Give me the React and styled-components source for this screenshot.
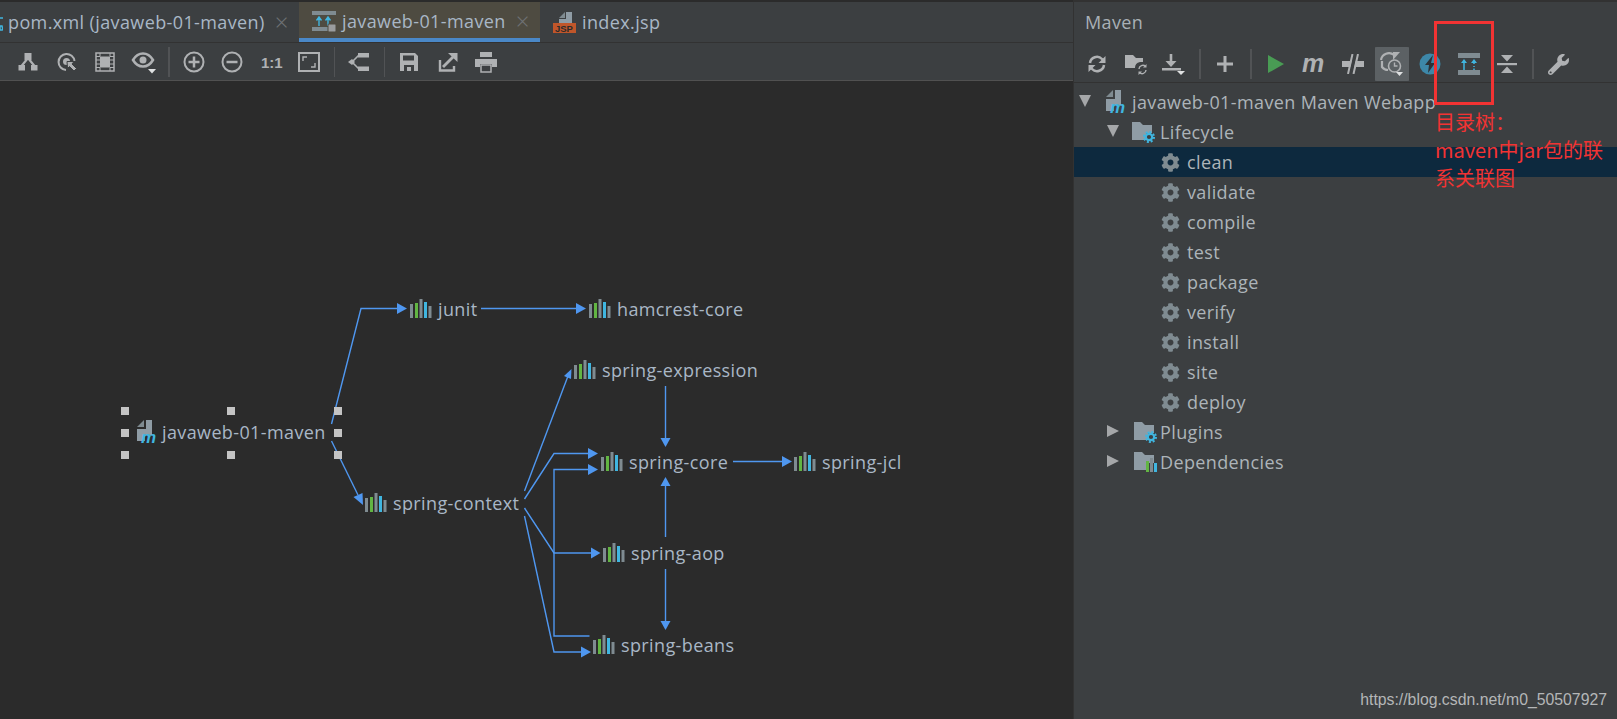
import React from "react";
import styled, { createGlobalStyle } from "styled-components";
import { FaCog, FaWrench } from "react-icons/fa";

const uiFont = `"Open Sans", "Noto Sans", sans-serif`;
const grey = "#afb1b3";
const blue = "#40b6e0";

const Global = createGlobalStyle`
  html, body { margin: 0; padding: 0; background: #2b2b2b; overflow: hidden; }
  * { box-sizing: border-box; }
`;

const Page = styled.div`
  display: flex;
  width: 1617px;
  height: 719px;
  font-family: ${uiFont};
  letter-spacing: 0.38px;
  overflow: hidden;
`;

const Editor = styled.div`
  display: flex;
  flex-direction: column;
  width: 1074px;
  border-right: 1px solid #323232;
  padding-top: 2px;
  background: #2b2b2b;
`;

const TabBar = styled.div`
  display: flex;
  height: 41px;
  background: #3c3f41;
  border-bottom: 1px solid #323232;
  overflow: hidden;
`;

const Tab = styled.div`
  display: flex;
  align-items: center;
  flex: none;
  width: ${(p) => p.$w}px;
  padding-left: ${(p) => p.$pad}px;
  padding-top: ${(p) => (p.$active ? 2 : 0)}px;
  font-size: 18px;
  color: #a9b7c6;
  background: ${(p) => (p.$active ? "#4e4b41" : "transparent")};
  border-bottom: ${(p) => (p.$active ? "4px solid #4a88c7" : "none")};
  white-space: nowrap;
`;

const TabIcon = styled.span`
  display: flex;
  flex: none;
  margin-right: ${(p) => p.$mr || 6}px;
`;

const Close = styled.span`
  margin-left: ${(p) => p.$ml}px;
  font-size: 24px;
  line-height: 1;
  font-weight: 300;
  color: #6e7274;
`;

const Toolbar = styled.div`
  display: flex;
  align-items: center;
  flex: none;
  height: ${(p) => p.$h}px;
  padding-left: ${(p) => p.$pad}px;
  background: #3c3f41;
  border-bottom: 1px solid ${(p) => p.$line};
`;

const IconButton = styled.div`
  display: flex;
  align-items: center;
  justify-content: center;
  flex: none;
  width: 38.5px;
  height: 34px;
  color: ${grey};
  background: ${(p) => (p.$on ? "linear-gradient(#5c6164, #5c6164) center / 34px 34px no-repeat" : "none")};
  border-radius: 4px;
`;

const Sep = styled.span`
  flex: none;
  width: 1.5px;
  height: 30px;
  margin: 0 ${(p) => p.$m}px;
  background: #515355;
`;

const Canvas = styled.div`
  position: relative;
  flex: 1;
  background: #2b2b2b;
`;

const Edges = styled.svg`
  position: absolute;
  inset: 0;
`;

const Node = styled.div`
  position: absolute;
  left: ${(p) => p.$x}px;
  top: ${(p) => p.$y}px;
  display: flex;
  align-items: center;
  gap: ${(p) => p.$gap}px;
  transform: translateY(-50%);
  font-size: 18px;
  color: #a9b7c6;
  white-space: nowrap;
`;

const Handle = styled.span`
  position: absolute;
  left: ${(p) => p.$x - 4}px;
  top: ${(p) => p.$y - 4}px;
  width: 8px;
  height: 8px;
  background: #c4c4c4;
`;

const Side = styled.div`
  display: flex;
  flex-direction: column;
  flex: 1;
  background: #3c3f41;
  border-top: 2px solid #323232;
`;

const SideTitle = styled.div`
  height: 44px;
  padding: 8px 0 0 11px;
  font-size: 18px;
  color: #a9b0b6;
`;

const Tree = styled.div`
  padding-top: 4px;
`;

const Row = styled.div`
  display: flex;
  align-items: center;
  height: 30px;
  padding-left: ${(p) => p.$indent}px;
  font-size: 18px;
  color: #adb4b9;
  background: ${(p) => (p.$selected ? "#0d293e" : "transparent")};
  white-space: nowrap;
`;

const RowLabel = styled.span`
  margin-left: ${(p) => p.$ml}px;
`;

const Arrow = styled.span`
  flex: none;
  width: 0;
  height: 0;
  margin-top: -3px;
  ${(p) =>
    p.$open
      ? `border-left: 6.5px solid transparent; border-right: 6.5px solid transparent; border-top: 12px solid #a5a7a9; margin-right: ${p.$mr}px;`
      : `border-top: 6.5px solid transparent; border-bottom: 6.5px solid transparent; border-left: 12px solid #a5a7a9; margin-right: ${p.$mr}px;`}
`;

const Gear = styled(FaCog)`
  flex: none;
  width: 19px;
  height: 19px;
  margin-right: 7px;
  color: #7f8b91;
`;

const Frame = styled.div`
  position: absolute;
  left: 1434px;
  top: 21px;
  width: 60px;
  height: 84px;
  border: 3px solid #f23333;
`;

const Note = styled.div`
  position: absolute;
  left: 1435px;
  top: 108px;
  width: 185px;
  font-family: "Noto Sans CJK SC", "Noto Sans", sans-serif;
  font-size: 20px;
  font-weight: 400;
  letter-spacing: 0;
  line-height: 28px;
  color: #f23333;
`;

const Mark = styled.div`
  position: absolute;
  right: 10px;
  top: 691px;
  font-family: "Liberation Sans", sans-serif;
  font-size: 15.8px;
  letter-spacing: 0;
  color: #b4b6b7;
`;

const Ico = ({ w = 20, h = 20, children }) => (
  <svg width={w} height={h} viewBox={`0 0 ${w} ${h}`} fill="none">
    {children}
  </svg>
);

const Lib = () => (
  <Ico w={22} h={20}>
    <rect x="0" y="5" width="3" height="14" fill="#7f8b91" />
    <rect x="5" y="4" width="3" height="15" fill="#62b543" />
    <rect x="9.5" y="0" width="3" height="19" fill="#7f8b91" />
    <rect x="14" y="3" width="3" height="16" fill={blue} />
    <rect x="18.5" y="7" width="3" height="12" fill="#7f8b91" />
  </Ico>
);

const Module = () => (
  <Ico w={22} h={24}>
    <path d="M0 7 7 0v7z" fill="#7f8b91" />
    <path d="M9 0h6v15H8v6H0V9h9z" fill="#8f9ca5" />
    <text x="4" y="23" fontFamily="Liberation Sans" fontWeight="700" fontStyle="italic" fontSize="17" letterSpacing="0" fill={blue}>
      m
    </text>
  </Ico>
);

const Folder = ({ children }) => (
  <Ico w={23} h={22}>
    <path d="M0 1h8l3 3h9v8h-6v7H0z" fill="#8f9ca5" />
    {children}
  </Ico>
);

const SmallGear = () => (
  <>
    <circle cx="17" cy="16" r="3.2" stroke={blue} strokeWidth="2.2" />
    <circle cx="17" cy="16" r="5" stroke={blue} strokeWidth="2" strokeDasharray="2 1.9" />
  </>
);

const Jsp = () => (
  <Ico w={23} h={24}>
    <path d="M6 8 12 2v6z" fill="#7f8b91" />
    <path d="M13 2h6v11H6V9h7z" fill="#8f9ca5" />
    <rect x="0" y="13" width="23" height="10" fill="#c0562a" />
    <text x="2" y="22" fontFamily="Liberation Sans" fontWeight="700" fontSize="9.5" letterSpacing="0" fill="#2b2b2b">
      JSP
    </text>
  </Ico>
);

const DepsTab = () => (
  <Ico w={24} h={22}>
    <rect x="0" y="1" width="24" height="4" fill="#7f8b91" />
    <rect x="0" y="17" width="24" height="4" fill="#7f8b91" />
    <path d="M7 16V8M4.500 10.500 7 7l2.500 3.500M16 16V8M13.500 10.500 16 7l2.500 3.500" stroke={blue} strokeWidth="1.400" />
    <rect x="16" y="14" width="8" height="8" rx="1" fill="#9a9c9e" stroke="#4e4b41" />
  </Ico>
);

const tools = {
  hierarchy: (
    <Ico>
      <path d="M10 6 3.500 14M10 6l6.500 8" stroke={grey} strokeWidth="2.200" />
      <rect x="6.500" y="1" width="7" height="7" fill={grey} />
      <rect x="0.500" y="13" width="6.500" height="5.500" fill={grey} />
      <rect x="13" y="13" width="6.500" height="5.500" fill={grey} />
    </Ico>
  ),
  target: (
    <Ico>
      <path d="M9 18a8 8 0 1 1 8.500-9" stroke={grey} strokeWidth="2" />
      <circle cx="9.500" cy="9.500" r="3.500" fill={grey} />
      <path d="M10 9.500h7l-2 2.500 4.500 4.500-2.500 2.500-4.500-4.500-2 2z" fill={grey} stroke="#3c3f41" strokeWidth="1" />
    </Ico>
  ),
  film: (
    <Ico>
      <rect x="1" y="1" width="18" height="18" stroke={grey} strokeWidth="1.500" />
      <rect x="5" y="4.500" width="10" height="11" fill={grey} />
      <path d="M1 4.500h4M1 8h4M1 12h4M1 15.500h4M15 4.500h4M15 8h4M15 12h4M15 15.500h4M5 1v3.500M15 1v3.500M5 15.500V19M15 15.500V19" stroke={grey} strokeWidth="1" />
    </Ico>
  ),
  eye: (
    <Ico w={26} h={24}>
      <path d="M2 10c3-5 6.500-6.500 10-6.500S19 5 22 10c-3 5-6.500 6.500-10 6.500S5 15 2 10z" stroke={grey} strokeWidth="2.500" />
      <circle cx="12" cy="10" r="3.500" fill={grey} />
      <path d="M17 19h8l-4 4.500z" fill="#dfe1e2" />
    </Ico>
  ),
  plus: (
    <Ico w={22} h={22}>
      <circle cx="11" cy="11" r="9.500" stroke={grey} strokeWidth="2" />
      <path d="M5.500 11h11M11 5.500v11" stroke={grey} strokeWidth="2.500" />
    </Ico>
  ),
  minus: (
    <Ico w={22} h={22}>
      <circle cx="11" cy="11" r="9.500" stroke={grey} strokeWidth="2" />
      <path d="M5.500 11h11" stroke={grey} strokeWidth="2.500" />
    </Ico>
  ),
  ratio: (
    <Ico w={24} h={18}>
      <text x="2" y="15" fontFamily="Liberation Sans" fontWeight="700" fontSize="15" letterSpacing="0" fill={grey}>
        1:1
      </text>
    </Ico>
  ),
  fit: (
    <Ico w={22} h={20}>
      <rect x="1" y="1" width="20" height="18" stroke={grey} strokeWidth="2" />
      <path d="M5 9V5h4M17 11v4h-4" stroke={grey} strokeWidth="1.400" />
    </Ico>
  ),
  branch: (
    <Ico w={22} h={20}>
      <path d="M4 10 11 3M4 10l7 7" stroke={grey} strokeWidth="1.600" />
      <path d="M0 10l4-3 3 3-3 3z" fill={grey} />
      <rect x="10" y="1" width="11" height="4.500" fill={grey} />
      <rect x="10" y="14.500" width="11" height="4.500" fill={grey} />
    </Ico>
  ),
  save: (
    <Ico>
      <path d="M1 1h15l3 3v15H1z" fill={grey} />
      <rect x="4" y="3.500" width="11" height="5" fill="#3c3f41" />
      <rect x="5" y="13" width="10" height="6" fill="#3c3f41" />
      <rect x="8" y="15" width="4" height="4" fill={grey} />
    </Ico>
  ),
  share: (
    <Ico>
      <path d="M2 8v10.500h14V14" stroke={grey} strokeWidth="2.400" />
      <path d="M5 15 15 5" stroke={grey} strokeWidth="2.800" />
      <path d="M10 1h9.500v9z" fill={grey} />
    </Ico>
  ),
  print: (
    <Ico w={22} h={22}>
      <rect x="5" y="1" width="12" height="5" fill={grey} />
      <path d="M0 8h22v8h-5v-3H5v3H0z" fill={grey} />
      <rect x="6" y="14" width="10" height="7" stroke={grey} strokeWidth="1.500" />
    </Ico>
  ),
  refresh: (
    <Ico>
      <path d="M3 9a7 7 0 0 1 12-4l1.500 1.500M17 11a7 7 0 0 1-12 4l-1.500-1.500" stroke={grey} strokeWidth="2.500" />
      <path d="M18.500 2v7h-7zM1.500 18v-7h7z" fill={grey} />
    </Ico>
  ),
  folderSync: (
    <Ico w={24} h={22}>
      <path d="M1 2h8l3 3h7v4h-3a6 6 0 0 0-5 6H1z" fill={grey} />
      <path d="M15 16a3.800 3.800 0 0 1 6.500-2.500M22 17a3.800 3.800 0 0 1-6.500 2.500" stroke={grey} strokeWidth="1.400" />
      <path d="M22.500 11v3.500H19zM14.500 22v-3.500H18z" fill={grey} />
    </Ico>
  ),
  download: (
    <Ico w={24} h={22}>
      <path d="M9 1v9" stroke={grey} strokeWidth="2.600" />
      <path d="M3.500 8h11L9 14z" fill={grey} />
      <rect x="0" y="15" width="19" height="2.500" fill={grey} />
      <path d="M15 18h8l-4 4z" fill="#dfe1e2" />
    </Ico>
  ),
  add: (
    <Ico w={16} h={16}>
      <path d="M0 8h16M8 0v16" stroke={grey} strokeWidth="3" />
    </Ico>
  ),
  play: (
    <Ico w={16} h={18}>
      <path d="M0 0l16 9-16 9z" fill="#499c54" />
    </Ico>
  ),
  mvn: (
    <Ico w={28} h={20}>
      <text x="1" y="18" fontFamily="Liberation Sans" fontWeight="700" fontStyle="italic" fontSize="25" letterSpacing="0" fill={grey}>
        m
      </text>
    </Ico>
  ),
  offline: (
    <Ico w={22} h={20}>
      <rect x="0" y="7" width="22" height="6" fill={grey} />
      <path d="M13.250 0 8.750 20" stroke="#3c3f41" strokeWidth="4" />
      <path d="M10.500 0 6 20M16 0l-4.500 20" stroke={grey} strokeWidth="2" />
    </Ico>
  ),
  history: (
    <Ico w={24} h={24}>
      <path d="M1 8a8 8 0 0 1 13-5" stroke={grey} strokeWidth="2.200" />
      <path d="M11 9V1h7z" fill={grey} transform="translate(2 -1)" />
      <path d="M2 9v6a8 8 0 0 0 6 3" stroke={grey} strokeWidth="2.200" />
      <circle cx="14.500" cy="14" r="6" fill="#5c6164" stroke={grey} strokeWidth="1.600" />
      <path d="M14.500 10.500V14h3" stroke={grey} strokeWidth="1.400" />
      <path d="M16 20h7l-3.500 4z" fill="#dfe1e2" />
    </Ico>
  ),
  bolt: (
    <Ico w={22} h={22}>
      <circle cx="11" cy="11" r="10.500" fill="#3d87a8" />
      <path d="M14 2 6 12h4l-1 8 7-10h-4z" fill="#2c3136" />
    </Ico>
  ),
  deps: (
    <Ico w={22} h={22}>
      <rect x="0" y="0" width="22" height="5" fill="#7f8b91" />
      <rect x="0" y="17" width="22" height="5" fill="#7f8b91" />
      <path d="M6 17V8M16 11V8M16 17v-1.500M16 14v-1" stroke={blue} strokeWidth="1.500" />
      <path d="M3 10l3-4 3 4zM13 10l3-4 3 4z" fill={blue} />
    </Ico>
  ),
  collapse: (
    <Ico w={20} h={20}>
      <rect x="0" y="9" width="20" height="2.200" fill={grey} />
      <path d="M4 1h12l-6 6.500zM4 19h12l-6-6.500z" fill={grey} />
    </Ico>
  ),
};

const leftTools = [
  ["hierarchy", "target", "film", "eye"],
  ["plus", "minus", "ratio", "fit"],
  ["branch"],
  ["save", "share", "print"],
];

const rightTools = [
  ["refresh", "folderSync", "download"],
  ["add"],
  ["play", "mvn", "offline", "history", "bolt", "deps", "collapse"],
  ["wrench"],
];

const ToolGroups = ({ groups, m }) =>
  groups.map((group, i) => (
    <React.Fragment key={i}>
      {i > 0 && <Sep $m={m} />}
      {group.map((name) => (
        <IconButton key={name} $on={name === "history"}>
          {name === "wrench" ? <FaWrench size={21} /> : tools[name]}
        </IconButton>
      ))}
    </React.Fragment>
  ));

const nodes = [
  { name: "javaweb-01-maven", x: 137, y: 351, module: true },
  { name: "junit", x: 410, y: 228 },
  { name: "hamcrest-core", x: 589, y: 228 },
  { name: "spring-expression", x: 574, y: 289 },
  { name: "spring-core", x: 601, y: 381 },
  { name: "spring-jcl", x: 794, y: 381 },
  { name: "spring-aop", x: 603, y: 472 },
  { name: "spring-context", x: 365, y: 422 },
  { name: "spring-beans", x: 593, y: 564 },
];

const handles = [
  [125, 330], [231, 330], [338, 330],
  [125, 352], [338, 352],
  [125, 374], [231, 374], [338, 374],
];

// coordonnees de la page, le viewBox retire la hauteur des barres
const edges = [
  "M331.500 424 361 308.500H400",
  "M331.500 441 358 495",
  "M481 308.500H578",
  "M524.500 491 568 376",
  "M665.500 386V440",
  "M733 461.500H784",
  "M665.500 537V484",
  "M665.500 569V623",
  "M524.500 499 554 453.500H590",
  "M589.500 636H554V469.500H590",
  "M524.500 508 554 553H593",
  "M524.500 516 554 652H583",
];

const heads = [
  "M397 303l10 5.500-10 5.500z",
  "M363 505 362.500 493 353.500 497z",
  "M576 303l10 5.500-10 5.500z",
  "M571.500 369 564 376 571 379z",
  "M660.500 438h10l-5 9z",
  "M660.500 486h10l-5-9z",
  "M660.500 621h10l-5 9z",
  "M782 456l10 5.500-10 5.500z",
  "M588 448l10 5.500-10 5.500z",
  "M588 464l10 5.500-10 5.500z",
  "M591 547.500l9.500 5.500-9.500 5.500z",
  "M581 646.500l10 5.500-10 5.500z",
];

const lifecycle = ["clean", "validate", "compile", "test", "package", "verify", "install", "site", "deploy"];

const App = () => (
  <Page>
    <Global />
    <Editor>
      <TabBar>
        <Tab $w={299} $pad={0}>
          <TabIcon $mr={5}>
            <Ico w={3} h={20}>
              <path d="M0 6h3M0 14h2l1 4H0z" stroke={blue} strokeWidth="1.500" />
            </Ico>
          </TabIcon>
          pom.xml (javaweb-01-maven)
          <Close $ml={10}>×</Close>
        </Tab>
        <Tab $w={241} $pad={13} $active>
          <TabIcon>
            <DepsTab />
          </TabIcon>
          javaweb-01-maven
          <Close $ml={10}>×</Close>
        </Tab>
        <Tab $w={160} $pad={13}>
          <TabIcon>
            <Jsp />
          </TabIcon>
          index.jsp
        </Tab>
      </TabBar>
      <Toolbar $h={38} $pad={9} $line="#515151">
        <ToolGroups groups={leftTools} m={5} />
      </Toolbar>
      <Canvas>
        <Edges width="1073" height="638" viewBox="0 81 1073 638" fill="none">
          {edges.map((d) => (
            <path key={d} d={d} stroke="#4f97f0" strokeWidth="1.400" />
          ))}
          {heads.map((d) => (
            <path key={d} d={d} fill="#4f97f0" />
          ))}
        </Edges>
        {handles.map(([x, y]) => (
          <Handle key={`${x}-${y}`} $x={x} $y={y} />
        ))}
        {nodes.map((n) => (
          <Node key={n.name} $x={n.x} $y={n.y} $gap={n.module ? 3 : 6}>
            {n.module ? <Module /> : <Lib />}
            {n.name}
          </Node>
        ))}
      </Canvas>
    </Editor>
    <Side>
      <SideTitle>Maven</SideTitle>
      <Toolbar $h={37} $pad={4} $line="#323232">
        <ToolGroups groups={rightTools} m={5.500} />
      </Toolbar>
      <Tree>
        <Row $indent={5}>
          <Arrow $open $mr={15} />
          <Module />
          <RowLabel $ml={4}>javaweb-01-maven Maven Webapp</RowLabel>
        </Row>
        <Row $indent={33}>
          <Arrow $open $mr={13} />
          <Folder>
            <SmallGear />
          </Folder>
          <RowLabel $ml={5}>Lifecycle</RowLabel>
        </Row>
        {lifecycle.map((name, i) => (
          <Row key={name} $indent={87} $selected={i === 0}>
            <Gear />
            {name}
          </Row>
        ))}
        <Row $indent={33}>
          <Arrow $mr={15} />
          <Folder>
            <SmallGear />
          </Folder>
          <RowLabel $ml={3}>Plugins</RowLabel>
        </Row>
        <Row $indent={33}>
          <Arrow $mr={15} />
          <Folder>
            <rect x="12" y="10" width="3" height="11" fill="#62b543" />
            <rect x="16" y="7" width="3" height="14" fill="#7f8b91" />
            <rect x="20" y="12" width="3" height="9" fill={blue} />
          </Folder>
          <RowLabel $ml={3}>Dependencies</RowLabel>
        </Row>
      </Tree>
    </Side>
    <Frame />
    <Note>
      目录树：
      <br />
      maven中jar包的联
      <br />
      系关联图
    </Note>
    <Mark>https://blog.csdn.net/m0_50507927</Mark>
  </Page>
);

export default App;
